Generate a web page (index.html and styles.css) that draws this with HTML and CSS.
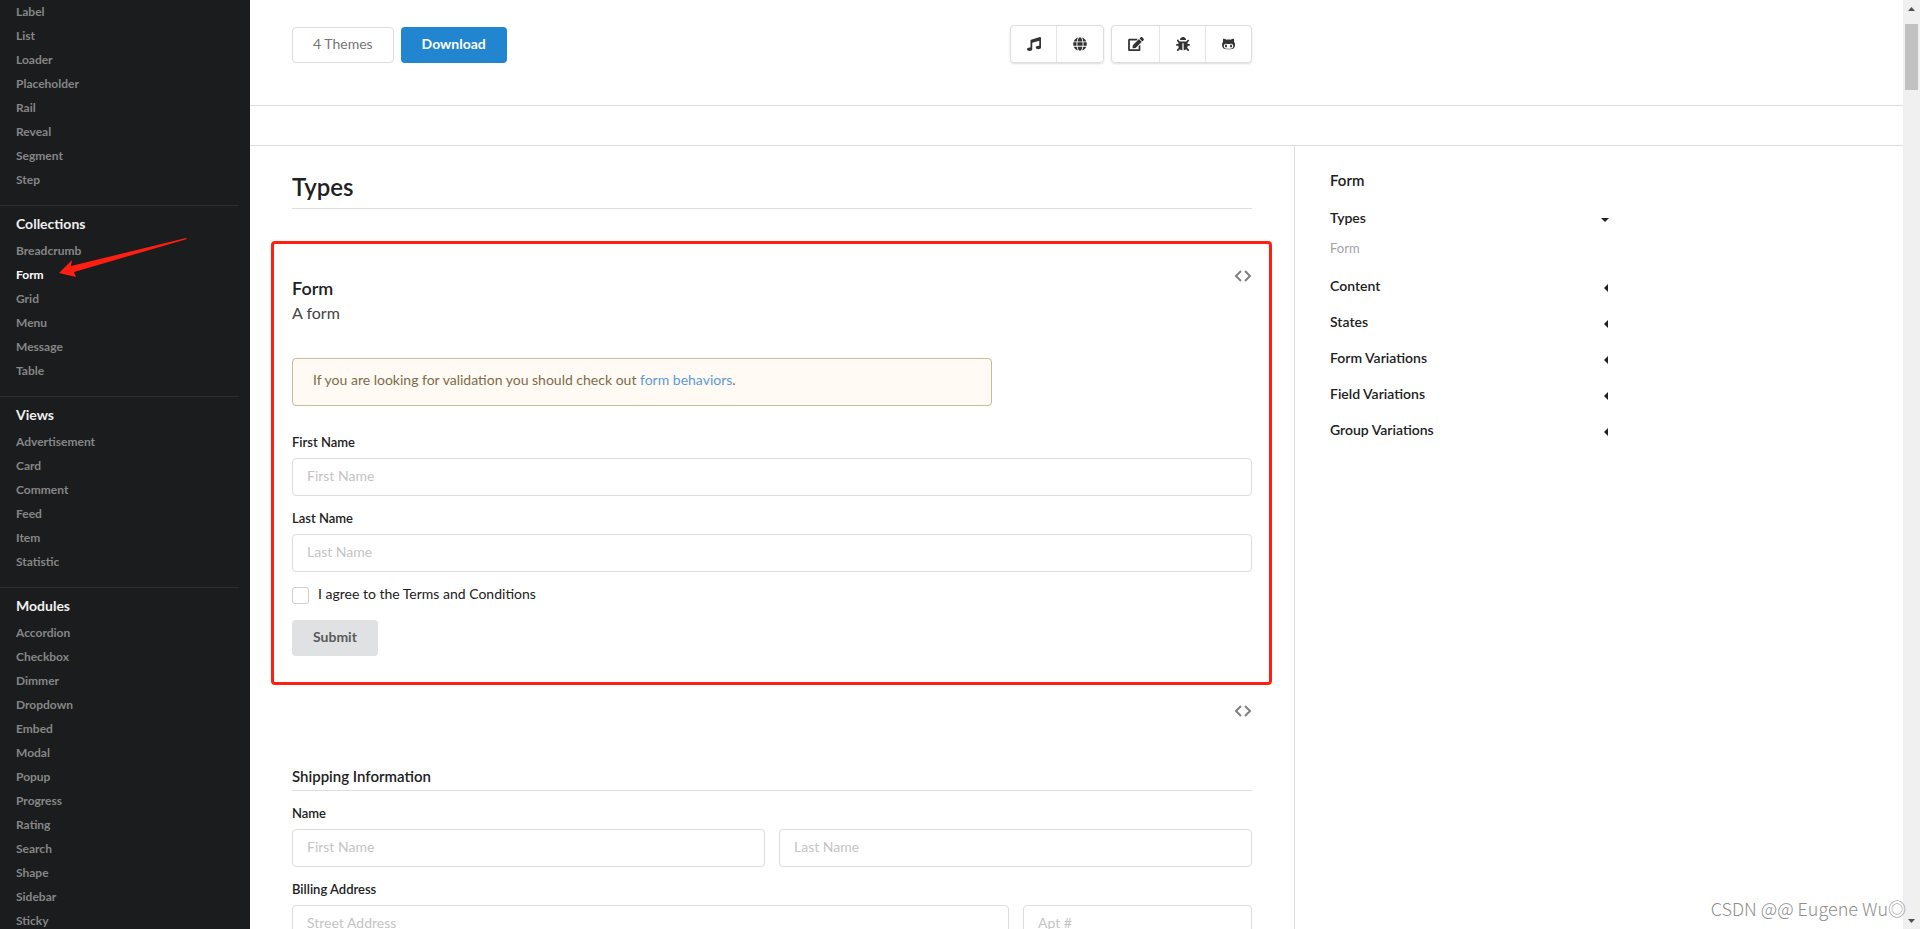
FILE: index.html
```html
<!DOCTYPE html>
<html lang="en">
<head>
<meta charset="utf-8">
<title>Form</title>
<link rel="stylesheet" href="styles.css">
</head>
<body>
<div class="page">
  <nav class="sidebar">
    <section class="group">
      <ul>
        <li><a href="#">Label</a></li><li><a href="#">List</a></li><li><a href="#">Loader</a></li><li><a href="#">Placeholder</a></li><li><a href="#">Rail</a></li><li><a href="#">Reveal</a></li><li><a href="#">Segment</a></li><li><a href="#">Step</a></li>
      </ul>
    </section>
    <section class="group">
      <h2>Collections</h2>
      <ul>
        <li><a href="#">Breadcrumb</a></li>
        <li class="current"><a href="#" class="active">Form</a>
          <svg class="pointer" viewBox="0 0 128 40" aria-hidden="true"><path d="M0 35 13 22 12 28 127 0 128 1 15 34 17 39Z"/></svg>
        </li>
        <li><a href="#">Grid</a></li><li><a href="#">Menu</a></li><li><a href="#">Message</a></li><li><a href="#">Table</a></li>
      </ul>
    </section>
    <section class="group">
      <h2>Views</h2>
      <ul>
        <li><a href="#">Advertisement</a></li><li><a href="#">Card</a></li><li><a href="#">Comment</a></li><li><a href="#">Feed</a></li><li><a href="#">Item</a></li><li><a href="#">Statistic</a></li>
      </ul>
    </section>
    <section class="group">
      <h2>Modules</h2>
      <ul>
        <li><a href="#">Accordion</a></li><li><a href="#">Checkbox</a></li><li><a href="#">Dimmer</a></li><li><a href="#">Dropdown</a></li><li><a href="#">Embed</a></li><li><a href="#">Modal</a></li><li><a href="#">Popup</a></li><li><a href="#">Progress</a></li><li><a href="#">Rating</a></li><li><a href="#">Search</a></li><li><a href="#">Shape</a></li><li><a href="#">Sidebar</a></li><li><a href="#">Sticky</a></li>
      </ul>
    </section>
  </nav>

  <div class="main">
    <header class="masthead">
      <div class="masthead-inner">
        <button class="button basic" type="button">4 Themes</button>
        <button class="button primary" type="button">Download</button>
        <div class="icon-menu push">
          <button type="button" aria-label="Music"><svg width="14" height="14" viewBox="0 0 512 512"><path d="M511.99 32.01c0-21.71-21.1-37.01-41.6-30.51L150.4 96c-13.3 4.2-22.4 16.5-22.4 30.5v261.42c-10.05-2.38-20.72-3.92-32-3.92-53.02 0-96 28.65-96 64s42.98 64 96 64 96-28.65 96-64V214.31l256-75.02v184.63c-10.05-2.38-20.72-3.92-32-3.92-53.02 0-96 28.65-96 64s42.98 64 96 64 96-28.65 96-64l-.01-351.99z"/></svg></button>
          <button type="button" aria-label="Language"><svg width="14" height="14" viewBox="0 0 496 512"><path d="M336.5 160C322 70.7 287.8 8 248 8s-74 62.7-88.5 152h177zM152 256c0 22.2 1.2 43.5 3.3 64h185.3c2.1-20.5 3.3-41.8 3.3-64s-1.2-43.5-3.3-64H155.3c-2.1 20.5-3.3 41.8-3.3 64zm324.7-96c-28.6-67.9-86.5-120.4-158-141.6 24.4 33.8 41.2 84.7 50 141.6h108zM177.2 18.4C105.8 39.6 47.8 92.1 19.3 160h108c8.7-56.9 25.5-107.8 49.9-141.6zM487.4 192H372.7c2.1 21 3.3 42.5 3.3 64s-1.2 43-3.3 64h114.6c5.5-20.5 8.6-41.8 8.6-64s-3.1-43.5-8.5-64zM120 256c0-21.5 1.2-43 3.3-64H8.6C3.2 212.5 0 233.8 0 256s3.2 43.5 8.6 64h114.6c-2-21-3.2-42.5-3.2-64zm39.5 96c14.5 89.3 48.7 152 88.5 152s74-62.7 88.5-152h-177zm159.3 141.6c71.4-21.2 129.4-73.7 158-141.6h-108c-8.8 56.9-25.6 107.8-50 141.6zM19.3 352c28.6 67.9 86.5 120.4 158 141.6-24.4-33.8-41.2-84.7-50-141.6h-108z"/></svg></button>
        </div>
        <div class="icon-menu">
          <button type="button" aria-label="Edit"><svg width="16" height="14" viewBox="0 0 576 512"><path d="M402.6 83.2l90.2 90.2c3.8 3.8 3.8 10 0 13.8L274.4 405.6l-92.8 10.3c-12.4 1.4-22.9-9.1-21.5-21.5l10.3-92.8L388.8 83.2c3.8-3.8 10-3.8 13.8 0zm162-22.9l-48.8-48.8c-15.2-15.2-39.9-15.2-55.2 0l-35.4 35.4c-3.8 3.8-3.8 10 0 13.8l90.2 90.2c3.8 3.8 10 3.8 13.8 0l35.4-35.4c15.2-15.3 15.2-40 0-55.2zM384 346.2V448H64V128h229.8c3.2 0 6.2-1.3 8.5-3.5l40-40c7.6-7.6 2.2-20.5-8.5-20.5H48C21.5 64 0 85.5 0 112v352c0 26.5 21.5 48 48 48h352c26.5 0 48-21.5 48-48V306.2c0-10.7-12.9-16-20.5-8.5l-40 40c-2.2 2.3-3.5 5.3-3.5 8.5z"/></svg></button>
          <button type="button" aria-label="Report a bug"><svg width="14" height="14" viewBox="0 0 512 512"><path d="M511.988 288.9c-.478 17.43-15.217 31.1-32.653 31.1H424v16c0 21.864-4.882 42.584-13.6 61.145l60.228 60.228c12.496 12.497 12.496 32.758 0 45.255-12.498 12.497-32.759 12.496-45.256 0l-54.736-54.736C345.886 467.965 314.351 480 280 480V236c0-6.627-5.373-12-12-12h-24c-6.627 0-12 5.373-12 12v244c-34.351 0-65.886-12.035-90.636-32.108l-54.736 54.736c-12.498 12.497-32.759 12.496-45.256 0-12.496-12.497-12.496-32.758 0-45.255l60.228-60.228C92.882 378.584 88 357.864 88 336v-16H32.666C15.23 320 .491 306.33.013 288.9-.484 270.816 14.028 256 32 256h56v-58.745l-46.628-46.628c-12.496-12.497-12.496-32.758 0-45.255 12.498-12.497 32.758-12.497 45.256 0L141.255 160h229.489l54.627-54.627c12.498-12.497 32.758-12.497 45.256 0 12.496 12.497 12.496 32.758 0 45.255L424 197.255V256h56c17.972 0 32.484 14.816 31.988 32.9zM257 0c-61.856 0-112 50.144-112 112h224C369 50.144 318.856 0 257 0z"/></svg></button>
          <button type="button" aria-label="GitHub"><svg width="13" height="14" viewBox="0 0 480 512"><path d="M186.1 328.7c0 20.9-10.9 55.1-36.7 55.1s-36.7-34.2-36.7-55.1 10.9-55.1 36.7-55.1 36.7 34.2 36.7 55.1zM480 278.2c0 31.9-3.2 65.7-17.5 95-37.9 76.6-142.1 74.8-216.7 74.8-75.8 0-186.2 2.7-225.6-74.8-14.6-29-20.2-63.1-20.2-95 0-41.9 13.9-81.5 41.5-113.6-5.2-15.8-7.7-32.4-7.7-48.8 0-21.5 4.9-32.3 14.6-51.8 45.3 0 74.3 9 108.8 36 29-6.9 58.8-10 88.7-10 27 0 54.2 2.9 80.4 9.2 34-26.7 63-35.2 107.8-35.2 9.8 19.5 14.6 30.3 14.6 51.8 0 16.4-2.6 32.7-7.7 48.2 27.5 32.4 39 72.3 39 114.2zm-64.3 50.5c0-43.9-26.7-82.6-73.5-82.6-18.9 0-37 3.4-56 6-14.9 2.3-29.8 3.2-45.1 3.2-15.2 0-30.1-.9-45.1-3.2-18.7-2.6-37-6-56-6-46.8 0-73.5 38.7-73.5 82.6 0 87.8 80.4 101.3 150.4 101.3h48.2c70.3 0 150.6-13.4 150.6-101.3zm-82.6-55.1c-25.8 0-36.7 34.2-36.7 55.1s10.9 55.1 36.7 55.1 36.7-34.2 36.7-55.1-10.9-55.1-36.7-55.1z"/></svg></button>
        </div>
      </div>
    </header>
    <div class="tabs"></div>

    <div class="columns">
      <main class="article">
        <h1>Types</h1>

        <section class="example highlighted">
          <div class="example-head">
            <div class="example-title">
              <h2>Form</h2>
              <p>A form</p>
            </div>
            <button class="code" type="button" aria-label="View code"><svg width="18" height="14" viewBox="0 0 18 14"><path d="M7 1 2 6l5 5M11 1l5 5-5 5"/></svg></button>
          </div>
          <p class="message">If you are looking for validation you should check out <a href="#">form behaviors</a>.</p>
          <form class="form">
            <div class="field">
              <label for="first">First Name</label>
              <input id="first" type="text" placeholder="First Name">
            </div>
            <div class="field">
              <label for="last">Last Name</label>
              <input id="last" type="text" placeholder="Last Name">
            </div>
            <div class="check">
              <input id="terms" type="checkbox">
              <label for="terms">I agree to the Terms and Conditions</label>
            </div>
            <button class="button submit" type="button">Submit</button>
          </form>
        </section>

        <section class="example shipping">
          <div class="example-head">
            <button class="code push" type="button" aria-label="View code"><svg width="18" height="14" viewBox="0 0 18 14"><path d="M7 1 2 6l5 5M11 1l5 5-5 5"/></svg></button>
          </div>
          <form class="form">
            <h3>Shipping Information</h3>
            <div class="field">
              <label for="ship-first">Name</label>
              <div class="pair">
                <input id="ship-first" type="text" placeholder="First Name">
                <input type="text" placeholder="Last Name" aria-label="Last Name">
              </div>
            </div>
            <div class="field">
              <label for="street">Billing Address</label>
              <div class="pair wide">
                <input id="street" type="text" placeholder="Street Address">
                <input type="text" placeholder="Apt #" aria-label="Apartment number">
              </div>
            </div>
          </form>
        </section>
      </main>

      <aside class="toc">
        <h2>Form</h2>
        <button type="button">Types <svg width="8" height="4" viewBox="0 0 8 4"><path d="M0 0h8L4 4z"/></svg></button>
        <a href="#">Form</a>
        <button type="button">Content <svg width="5" height="8" viewBox="0 0 5 8"><path d="M4 0v8L0 4z"/></svg></button>
        <button type="button">States <svg width="5" height="8" viewBox="0 0 5 8"><path d="M4 0v8L0 4z"/></svg></button>
        <button type="button">Form Variations <svg width="5" height="8" viewBox="0 0 5 8"><path d="M4 0v8L0 4z"/></svg></button>
        <button type="button">Field Variations <svg width="5" height="8" viewBox="0 0 5 8"><path d="M4 0v8L0 4z"/></svg></button>
        <button type="button">Group Variations <svg width="5" height="8" viewBox="0 0 5 8"><path d="M4 0v8L0 4z"/></svg></button>
      </aside>
    </div>
  </div>

  <div class="scrollbar">
    <button type="button" aria-label="Scroll up"><svg width="7" height="4" viewBox="0 0 7 4"><path d="M0 4h7L3.500 0z"/></svg></button>
    <div class="track"><div class="thumb"></div></div>
    <button type="button" aria-label="Scroll down"><svg width="7" height="4" viewBox="0 0 7 4"><path d="M0 0h7L3.500 4z"/></svg></button>
  </div>
  <div class="watermark">CSDN @@ Eugene Wu◎</div>
</div>
</body>
</html>
```

FILE: styles.css
```css
* { box-sizing: border-box; }
body {
  margin: 0;
  font: 14px/20px Lato, "Liberation Sans", sans-serif;
  color: #212121;
  background: #fff;
}
h1, h2, h3, p, ul { margin: 0; padding: 0; }
ul { list-style: none; }
button, input { font: inherit; color: inherit; margin: 0; }
button { padding: 0; border: 0; background: none; cursor: pointer; }
svg { display: block; fill: currentColor; flex: none; }
a { text-decoration: none; }

.page { position: relative; display: flex; height: 100vh; overflow: hidden; }

/* Left navigation */
.sidebar { flex: none; width: 250px; background: #1b1c1d; }
.group { margin-right: 11px; padding-bottom: 13px; }
.group + .group { border-top: 1px solid #2d2e2f; padding-top: 6px; }
.group h2 { padding-left: 16px; margin-bottom: 3px; font-size: 14px; line-height: 24px; font-weight: 700; color: #f0f0f0; }
.group a { display: block; padding-left: 16px; font-size: 12px; line-height: 24px; font-weight: 700; color: #858686; }
.group a.active { color: #fff; }
.current { position: relative; }
.pointer { position: absolute; left: 59px; top: -25px; width: 128px; height: 40px; fill: #ff1e12; z-index: 2; }

/* Masthead */
.main { flex: 1; min-width: 0; overflow: hidden; display: flex; flex-direction: column; }
.masthead { flex: none; padding: 25px 42px 42px; border-bottom: 1px solid #dcdddd; }
.masthead-inner { display: flex; align-items: flex-end; gap: 7px; max-width: 960px; }
.button { height: 36px; padding: 0 21px 2px; border-radius: 4px; line-height: 34px; }
.button.basic { border: 1px solid #dcdddd; color: #767676; padding: 0 20px 2px; line-height: 32px; }
.button.primary { background: #2185d0; color: #fff; font-weight: 700; }
.button.submit { background: #e0e1e2; color: #5a5a5a; font-weight: 700; }
.push { margin-left: auto; }
.icon-menu { display: flex; height: 38px; border: 1px solid #dcdddd; border-radius: 4px; box-shadow: 0 1px 2px #22242626; color: #333; }
.icon-menu button { padding: 0 16px; }
.icon-menu button + button { box-shadow: -1px 0 #e5e5e6; }
.tabs { flex: none; height: 40px; border-bottom: 1px solid #dcdddd; }

/* Article */
.columns { flex: 1; min-height: 0; display: flex; }
.article { flex: 0 1 1045px; padding: 25px 42px 0; border-right: 1px solid #dcdddd; }
h1 { padding-bottom: 5px; border-bottom: 1px solid #dcdddd; font-size: 24px; line-height: 32px; font-weight: 600; }
.highlighted { margin: 32px -20px 0 -21px; padding: 26px 17px 26px 18px; border: 3px solid #ff1e12; border-radius: 4px; }
.example-head { display: flex; justify-content: space-between; }
.example-title { padding-top: 6px; }
.example-title h2 { margin-bottom: 1px; font-size: 18px; line-height: 24px; font-weight: 600; }
.example-title p { font-size: 16px; line-height: 24px; color: #444; }
.code { align-self: flex-start; }
.code svg { fill: none; stroke: #808080; stroke-width: 2; }
.message { max-width: 700px; margin: 33px 0 26px; padding: 11px 20px 15px; border: 1px solid #c9ba9b; border-radius: 4px; background: #fffaf3; color: #7d6c4a; }
.message a { color: #5c9bd6; }
.field { margin-bottom: 12px; }
.field label { display: block; margin-bottom: 6px; font-size: 13px; font-weight: 600; }
.field input { display: block; width: 100%; min-width: 0; height: 38px; padding: 0 14px 4px; border: 1px solid #dcdddd; border-radius: 4px; outline: 0; background: #fff; }
.field input::placeholder { color: #c4c4c4; opacity: 1; }
.check { display: flex; gap: 9px; margin-top: 15px; margin-bottom: 16px; height: 17px; }
.check input { appearance: none; width: 17px; height: 17px; border: 1px solid #d0d0d1; border-radius: 3px; }
.check label { line-height: 13px; }
.submit { display: block; }
.shipping { padding-top: 20px; }
h3 { margin: 45px 0 12px; padding-bottom: 2px; border-bottom: 1px solid #dcdddd; font-size: 15px; line-height: 24px; font-weight: 600; }
.pair { display: grid; grid-template-columns: 1fr 1fr; gap: 14px; }
.pair.wide { grid-template-columns: 717fr 229fr; }

/* Table of contents */
.toc { flex: 0 1 315px; padding: 24px 0 0 35px; }
.toc h2 { margin-bottom: 10px; font-size: 15px; line-height: 20px; font-weight: 600; }
.toc button { display: flex; justify-content: space-between; align-items: center; width: 100%; height: 36px; padding-right: 1px; font-weight: 600; }
.toc button svg { margin-top: 3px; }
.toc a { display: block; padding: 2px 0 10px; font-size: 13px; color: #a3a3a8; }

/* Window scrollbar */
.scrollbar { flex: none; display: flex; flex-direction: column; width: 17px; background: #f0f0f0; color: #505050; }
.scrollbar button { display: grid; place-items: center; height: 17px; }
.track { flex: 1; padding: 7px 2px; }
.thumb { height: 66px; background: #c1c1c1; }

.watermark { position: absolute; right: 14px; bottom: 9px; font: 300 18px/24px "Noto Sans CJK SC", sans-serif; color: #8f8f8f; }
```
